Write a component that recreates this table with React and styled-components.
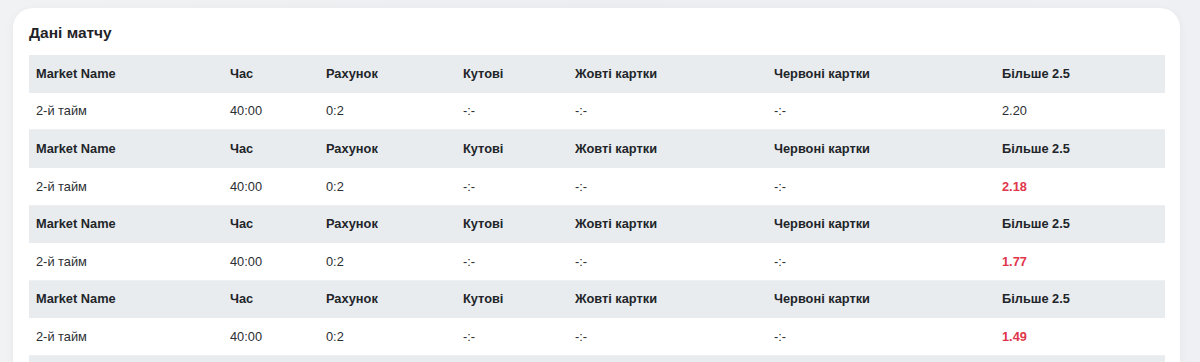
import React from "react";
import styled, { createGlobalStyle } from "styled-components";

const Global = createGlobalStyle`
  html, body { margin: 0; padding: 0; }
  body {
    background: linear-gradient(90deg, #f1f2f4 0%, #eceef1 50%, #eff0f3 100%);
    font-family: "Liberation Sans", Arial, sans-serif;
    color: #212529;
    overflow: hidden;
  }
`;

const Page = styled.div`
  padding: 8px 20px 0 13px;
  height: 362px;
  box-sizing: border-box;
  overflow: hidden;
`;

const Card = styled.section`
  background: #fff;
  border-radius: 20px;
  box-shadow: 0 2px 10px rgba(0, 0, 0, 0.05);
  padding: 16px 16px 0 16px;
  height: 400px;
`;

const Title = styled.h2`
  margin: 0 0 13px 0;
  font-size: 15.5px;
  line-height: 18px;
  font-weight: 700;
  color: #1f2328;
`;

const Table = styled.table`
  width: 100%;
  border-collapse: collapse;
  table-layout: fixed;
  font-size: 12.8px;
`;

const Cell = styled.td`
  padding: 11.6px 7px 10.4px;
  line-height: 14.65px;
  text-align: left;
  white-space: nowrap;
  font-weight: ${(p) => (p.$head || p.$hot ? 700 : 400)};
  color: ${(p) => (p.$hot ? "#e0364b" : p.$head ? "#212529" : "#2b2f33")};
`;

const Row = styled.tr`
  background: ${(p) => (p.$head ? "#e9ecef" : "#fff")};
  border-bottom: 1px solid ${(p) => (p.$head ? "#e9ecef" : "#eef0f2")};
`;

const widths = [194, 96, 137, 112, 199, 228, 170];
const headers = ["Market Name", "Час", "Рахунок", "Кутові", "Жовті картки", "Червоні картки", "Більше 2.5"];
const data = [
  { v: "2.20", hot: false },
  { v: "2.18", hot: true },
  { v: "1.77", hot: true },
  { v: "1.49", hot: true },
];

export default function App() {
  return (
    <>
      <Global />
      <Page>
        <Card>
          <Title>Дані матчу</Title>
          <Table>
            <colgroup>
              {widths.map((w, i) => (
                <col key={i} style={{ width: w }} />
              ))}
            </colgroup>
            <tbody>
              {data.map((d, i) => (
                <React.Fragment key={i}>
                  <Row $head>
                    {headers.map((h) => (
                      <Cell key={h} $head>
                        {h}
                      </Cell>
                    ))}
                  </Row>
                  <Row>
                    <Cell>2-й тайм</Cell>
                    <Cell>40:00</Cell>
                    <Cell>0:2</Cell>
                    <Cell>-:-</Cell>
                    <Cell>-:-</Cell>
                    <Cell>-:-</Cell>
                    <Cell $hot={d.hot}>{d.v}</Cell>
                  </Row>
                </React.Fragment>
              ))}
              <Row $head>
                {headers.map((h) => (
                  <Cell key={h} $head>
                    {h}
                  </Cell>
                ))}
              </Row>
            </tbody>
          </Table>
        </Card>
      </Page>
    </>
  );
}
